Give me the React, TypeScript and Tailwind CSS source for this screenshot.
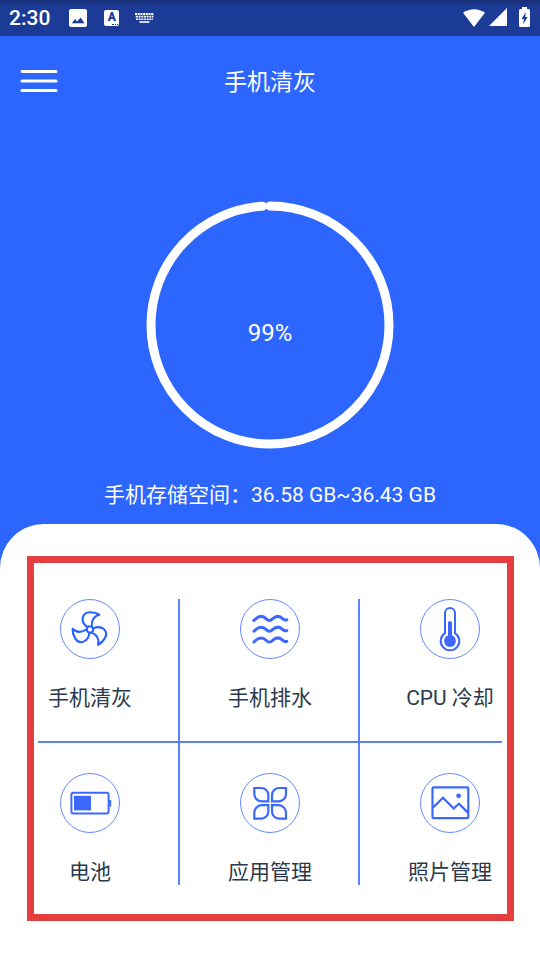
import React from 'react';

type Tool = {
  label: string;
  icon: React.ReactNode;
};

const FAN_BLADE = 'M27.4 28.2C20 23 21.5 13.4 30 13.3c4 0 7 .9 9.3 2.5C34 17 31 22 31.9 27.6';

const tools: Tool[] = [
  {
    label: '手机清灰',
    icon: (
      <g stroke="#2962ff" strokeWidth="2.1" strokeLinejoin="round" strokeLinecap="round">
        <circle cx="30" cy="30.5" r="3.2" />
        <path d={FAN_BLADE} />
        <path d={FAN_BLADE} transform="rotate(120 30 30.5)" />
        <path d={FAN_BLADE} transform="rotate(240 30 30.5)" />
      </g>
    ),
  },
  {
    label: '手机排水',
    icon: (
      <g stroke="#3d68ff" strokeWidth="3" strokeLinecap="round">
        <path d="M13.9 21.4C19 16.4 22.6 16.2 26 19.6c2.6 2.6 4.2 2.6 6.8 0 3.800-3.400 6.900-3 10 .2 1.400 1.300 2.600 1.500 4 1" />
        <path d="M13.9 32.2C19 27.2 22.6 27 26 30.4c2.6 2.6 4.2 2.6 6.8 0 3.800-3.400 6.900-3 10 .2 1.400 1.300 2.600 1.500 4 1" />
        <path d="M13.9 43C19 38 22.6 37.8 26 41.2c2.6 2.6 4.2 2.6 6.8 0 3.800-3.400 6.900-3 10 .2 1.400 1.300 2.600 1.500 4 1" />
      </g>
    ),
  },
  {
    label: 'CPU 冷却',
    icon: (
      <g stroke="#3d68ff" strokeWidth="2">
        <path d="M25 34.2V14a5 5 0 0 1 10 0v20.2a9.3 9.3 0 1 1-10 0Z" />
        <circle cx="30" cy="42" r="5.9" fill="#3d68ff" stroke="none" />
        <path d="M30 24v16" strokeWidth="4" strokeLinecap="round" />
      </g>
    ),
  },
  {
    label: '电池',
    icon: (
      <g stroke="#3d68ff" strokeWidth="2">
        <rect x="11.4" y="19.8" width="37.2" height="20.8" rx="2" />
        <rect x="14" y="22.8" width="17" height="14.6" fill="#3d68ff" stroke="none" />
        <path d="M50.2 27v6.6" strokeWidth="2" />
      </g>
    ),
  },
  {
    label: '应用管理',
    icon: (
      <g stroke="#3d68ff" strokeWidth="2.2">
        <path d="M14.300 15h7a7 7 0 0 1 7 7v6.400h-6.400a7.600 7.600 0 0 1-7.600-7Z" />
        <path d="M46 15h-7a7 7 0 0 0-7 7v6.400h6.400a7.600 7.600 0 0 0 7.600-7Z" />
        <path d="M14.300 45.600h7a7 7 0 0 0 7-7v-6.400h-6.400a7.600 7.600 0 0 0-7.600 7Z" />
        <path d="M46 45.600h-7a7 7 0 0 1-7-7v-6.400h6.400a7.600 7.600 0 0 1 7.600 7Z" />
      </g>
    ),
  },
  {
    label: '照片管理',
    icon: (
      <g stroke="#3d68ff" strokeWidth="2.2">
        <rect x="12.5" y="14.4" width="35.8" height="30.8" rx="1" />
        <path d="m13 34.600 10-9.800 10.700 10.800 5.300-4.800 8.900 8.800" />
        <circle cx="38.6" cy="22.8" r="2.4" fill="#3d68ff" stroke="none" />
      </g>
    ),
  },
];

const StatusBar = () => (
  <div className="flex h-9 items-center bg-[#1b3b97] bg-linear-to-b from-[#182f78] to-[#1b3b97] to-20% pl-[9px] pr-[10px]">
    <span className="text-[21px] leading-6 font-medium">2:30</span>
    <svg className="ml-[19px]" width="18" height="18" viewBox="0 0 18 18" aria-hidden="true">
      <rect width="18" height="18" rx="2" fill="#fff" />
      <path d="M2.8 14.3 6 10l2.2 2.6L11.600 8.400l4 5.900Z" fill="#1b3b97" />
    </svg>
    <span className="ml-[17px] flex h-4 w-[15px] flex-col items-center rounded-xs bg-white text-[#1b3b97]">
      <span className="text-[12px] leading-[14px] font-black">A</span>
      <span className="mr-px h-px w-[6px] self-end border-t border-dotted border-[#1b3b97]" />
    </span>
    <svg className="ml-4" width="19" height="10" viewBox="0 0 19 10" aria-hidden="true">
      <g stroke="#fff" fill="none">
        <path d="M0 1h19" strokeWidth="2" strokeDasharray="2 .7" />
        <path d="M.8 3.7h17.6" strokeWidth="1.8" strokeDasharray="2 .7" />
        <path d="M1 6.2h17" strokeWidth="1.6" strokeDasharray="2 .7" />
        <path d="M4.5 9h10" strokeWidth="1.6" />
      </g>
    </svg>
    <div className="ml-auto flex items-center pb-0.5">
      <svg width="22" height="19" viewBox="0 0 22 19" fill="#fff" aria-hidden="true">
        <path d="M0 4.800C6.500 0 15.500 0 22 4.800L11 19Z" />
      </svg>
      <svg className="ml-1" width="18" height="18" viewBox="0 0 18 18" fill="#fff" aria-hidden="true">
        <path d="M18 0v18H0Z" />
      </svg>
      <svg className="ml-3" width="11" height="20" viewBox="0 0 11 20" aria-hidden="true">
        <path d="M3 0h5v2h1.500A1.500 1.500 0 0 1 11 3.500v15A1.500 1.500 0 0 1 9.500 20h-8A1.500 1.500 0 0 1 0 18.500v-15A1.500 1.500 0 0 1 1.500 2H3Z" fill="#fff" />
        <path d="M6.800 5 2.600 12h2.300l-.7 5.300L8.600 10H6.300Z" fill="#1b3b97" />
      </svg>
    </div>
  </div>
);

const StorageRing = ({ percent }: { percent: number }) => (
  <div className="relative mx-auto size-[248px]">
    <svg viewBox="0 0 248 248" fill="none" aria-hidden="true">
      <circle
        cx="124"
        cy="124"
        r="119"
        stroke="#fff"
        strokeWidth="9"
        strokeLinecap="round"
        pathLength="100"
        strokeDasharray={`${percent} 100`}
        transform="rotate(-90 124 124)"
      />
    </svg>
    <span className="absolute inset-0 flex items-center justify-center pt-4 text-[24px] leading-8">
      {percent}%
    </span>
  </div>
);

const ToolButton = ({ label, icon }: Tool) => (
  <button type="button" className="flex w-full flex-col items-center gap-[26px]">
    <svg width="60" height="60" viewBox="0 0 60 60" fill="none" aria-hidden="true">
      <circle cx="30" cy="30" r="29.5" stroke="#6688ff" />
      {icon}
    </svg>
    <span className="text-[21px] leading-[26px]">{label}</span>
  </button>
);

const ToolRow = ({ items, className }: { items: Tool[]; className: string }) => (
  <div className="grid grid-cols-3">
    {items.map(item => (
      <div
        key={item.label}
        className={`border-[#5c80f8] not-last:border-r-2 not-last:pl-0.5 ${className}`}
      >
        <ToolButton label={item.label} icon={item.icon} />
      </div>
    ))}
  </div>
);

export default function App() {
  return (
    <div className="flex min-h-screen flex-col bg-[#2d65ff] font-['Roboto','Noto_Sans_CJK_SC',sans-serif] text-white">
      <StatusBar />

      <header className="grid h-[90px] grid-cols-[40px_1fr_40px] items-center px-5">
        <button type="button" aria-label="菜单">
          <svg width="38" height="24" viewBox="0 0 38 24" stroke="#fff" strokeWidth="3" strokeLinecap="round" aria-hidden="true">
            <path d="M2 2.500h34M2 12h34M2 21.500h34" />
          </svg>
        </button>
        <h1 className="pt-1 text-center text-[23px] leading-8">手机清灰</h1>
      </header>

      <main className="flex grow flex-col pt-[75px]">
        <StorageRing percent={99} />
        <p className="mt-[30px] text-center text-[21px] leading-8">
          手机存储空间：36.58 GB~36.43 GB
        </p>

        <section className="mt-[13px] grow rounded-t-[44px] bg-white py-8 text-[#2a3a4c]">
          <div className="relative pt-[43px] pb-9">
            <ToolRow items={tools.slice(0, 3)} className="pb-[30px]" />
            <hr className="mx-[38px] border-t-2 border-[#5c80f8]" />
            <ToolRow items={tools.slice(3)} className="pt-[30px]" />
            <div className="pointer-events-none absolute inset-y-0 right-[26px] left-[27px] border-[7px] border-[#e53e3e]" />
          </div>
        </section>
      </main>
    </div>
  );
}
